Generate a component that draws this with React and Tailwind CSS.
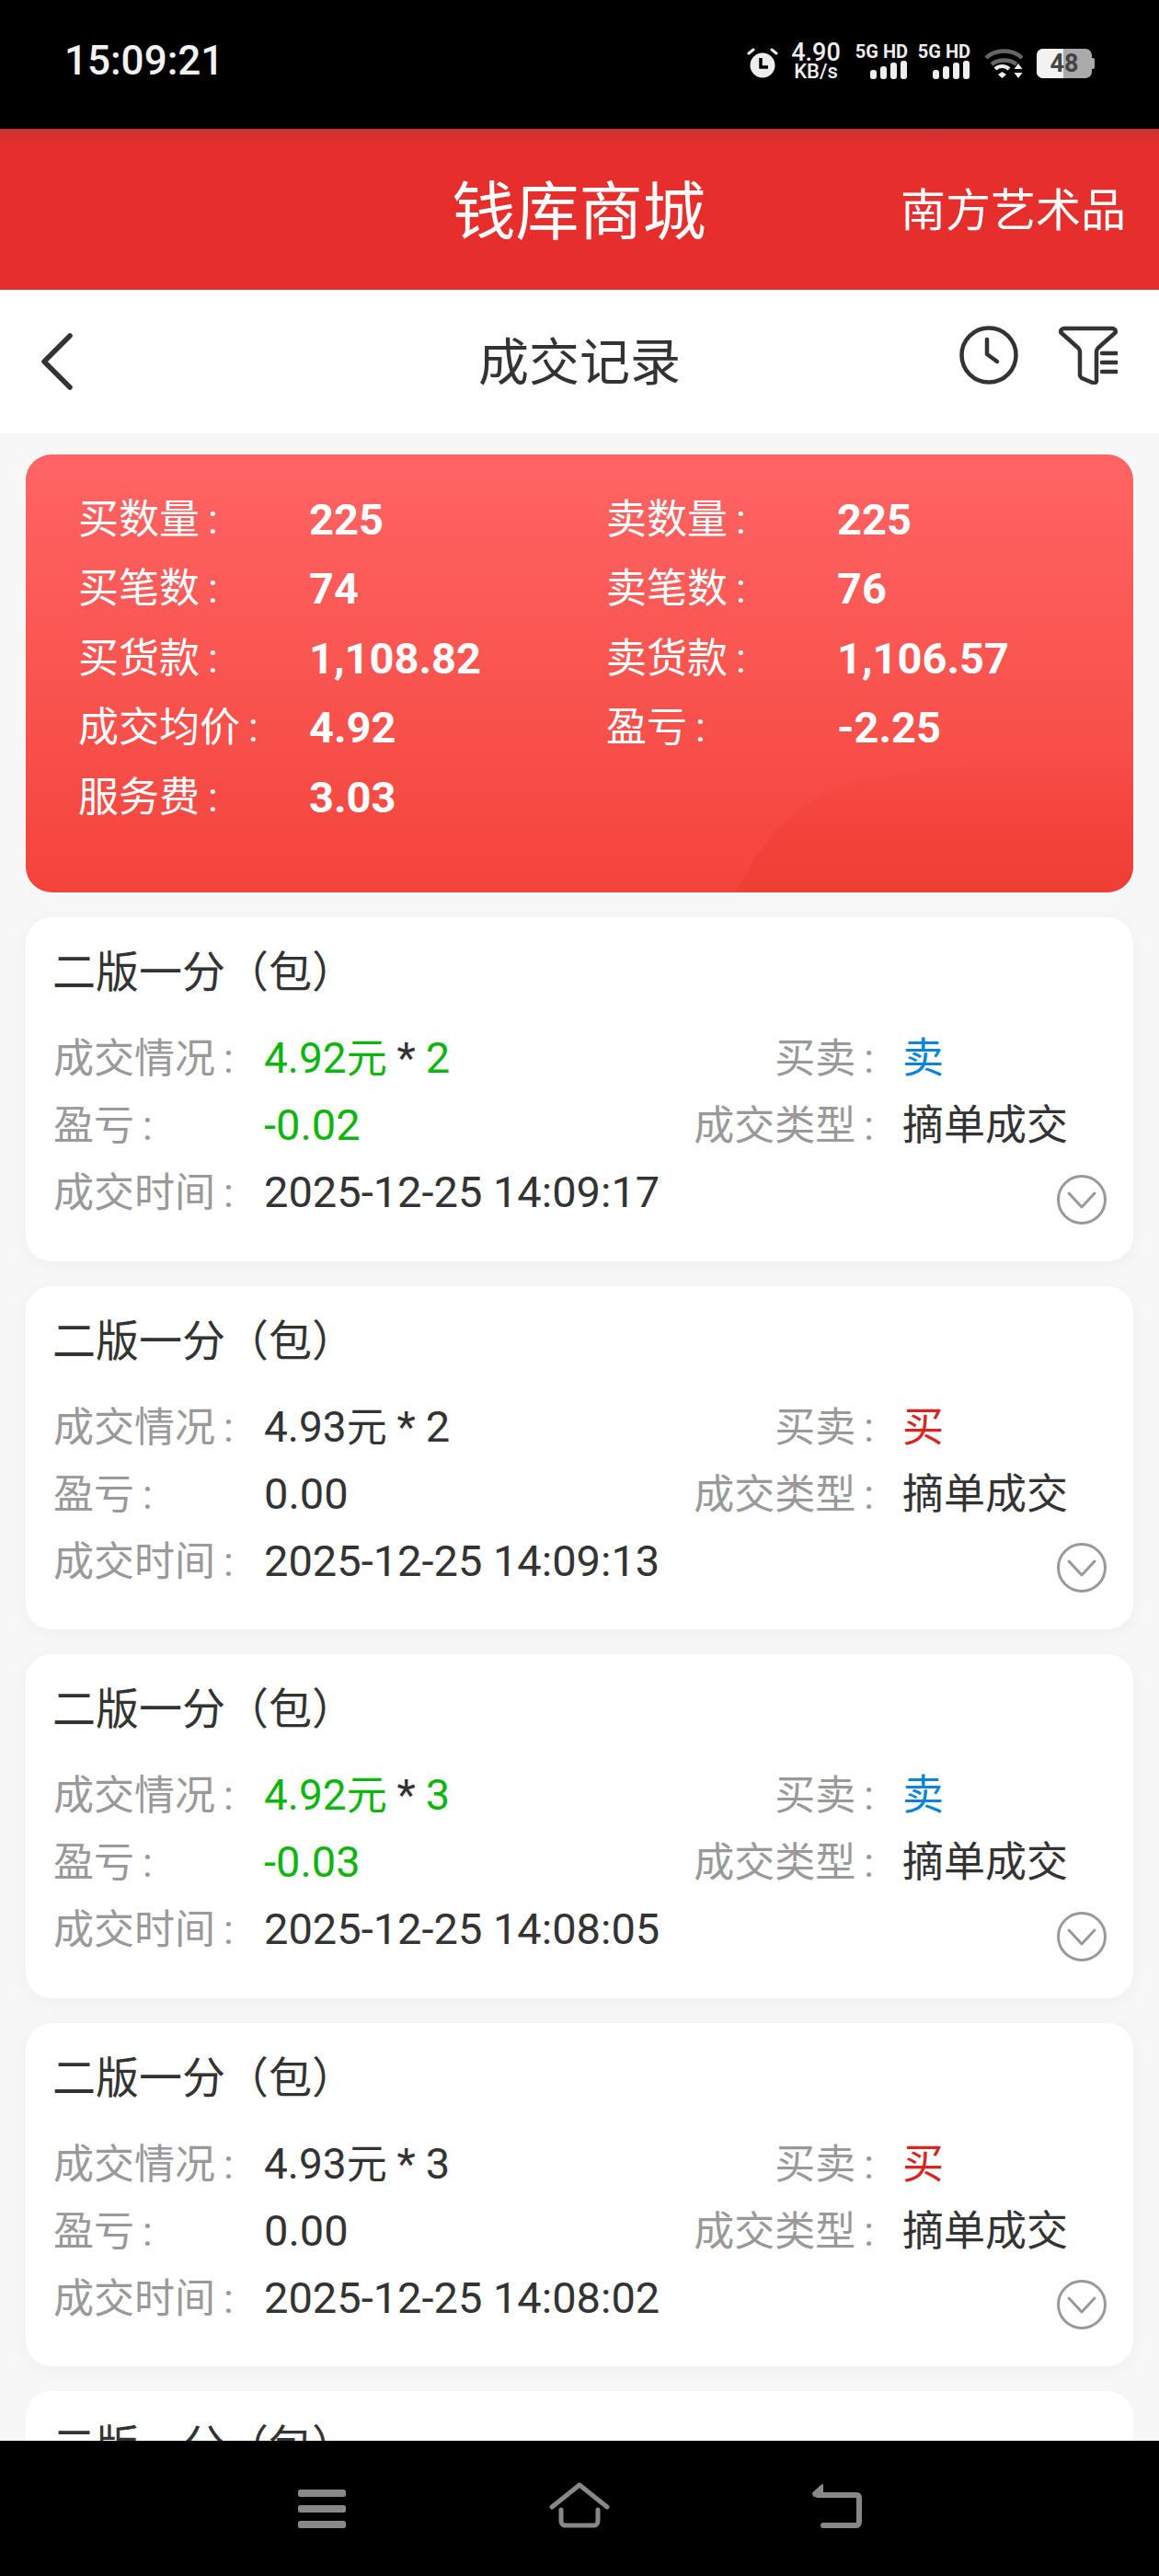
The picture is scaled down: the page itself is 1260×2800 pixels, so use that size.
import { Fragment } from 'react'

const FONT = "font-['Roboto','Noto_Sans_CJK_SC',sans-serif]"

const summary = [
  ['买数量', '225', '卖数量', '225'],
  ['买笔数', '74', '卖笔数', '76'],
  ['买货款', '1,108.82', '卖货款', '1,106.57'],
  ['成交均价', '4.92', '盈亏', '-2.25'],
  ['服务费', '3.03'],
]

const trades = [
  { price: '4.92', qty: '2', side: '卖', pl: '-0.02', time: '2025-12-25 14:09:17' },
  { price: '4.93', qty: '2', side: '买', pl: '0.00', time: '2025-12-25 14:09:13' },
  { price: '4.92', qty: '3', side: '卖', pl: '-0.03', time: '2025-12-25 14:08:05' },
  { price: '4.93', qty: '3', side: '买', pl: '0.00', time: '2025-12-25 14:08:02' },
]

// labels in the app have a small gap before the colon
function Label({ children }) {
  return (
    <>
      {children}
      <span className="ml-[9px]">:</span>
    </>
  )
}

function Bars() {
  return (
    <svg width="41" height="20" viewBox="0 0 41 20" fill="#eee">
      <rect x="0" y="10" width="7" height="10" rx="3" />
      <rect x="11" y="6" width="7" height="14" rx="3" />
      <rect x="22" y="2" width="7" height="18" rx="3" />
      <rect x="33" y="0" width="7" height="20" rx="3" />
    </svg>
  )
}

function Signal() {
  return (
    <div className="flex flex-col items-end w-[56px]">
      <span className="text-[20px] leading-[19px] font-bold text-[#eee] whitespace-nowrap">5G HD</span>
      <Bars />
    </div>
  )
}

function StatusBar() {
  return (
    <div className="h-[140px] bg-black flex items-start justify-between pl-[70px] pr-[70px] pt-[40px]">
      <span className="text-[44px] leading-[52px] font-medium text-[#f2f2f2]">15:09:21</span>
      <div className="flex items-start pt-[7px]">
        {/* alarm */}
        <svg className="mt-[5px]" width="34" height="33" viewBox="0 0 34 33">
          <circle cx="17" cy="19" r="13.5" fill="#eee" />
          <path d="M15 11v10h8" fill="none" stroke="#000" strokeWidth="3.5" />
          <path d="M2 6l5-4M32 6l-5-4" stroke="#eee" strokeWidth="3" strokeLinecap="round" />
        </svg>
        <div className="flex flex-col items-center w-[52px] ml-[15px] text-[#eee] font-medium">
          <span className="text-[27px] leading-[21px]">4.90</span>
          <span className="text-[22px] leading-[19px]">KB/s</span>
        </div>
        <div className="flex gap-[12px] ml-[18px]">
          <Signal />
          <Signal />
        </div>
        {/* wifi */}
        <svg className="ml-[15px] mt-[5px]" width="43" height="34" viewBox="0 0 43 34">
          <path d="M2 11C12 1 31 1 41 11" fill="none" stroke="#666" strokeWidth="4.5" />
          <path d="M8 18c7-6 20-6 27 0" fill="none" stroke="#666" strokeWidth="4.5" />
          <path d="M12 23c4-4 11-4 15 0" fill="none" stroke="#eee" strokeWidth="4" />
          <path d="M15 29l4.500-3 4.500 3-4.500 4z" fill="#eee" />
          <path d="M37 17l4.500 6h-9zM37 33l4.500-6h-9z" fill="#eee" />
        </svg>
        {/* battery */}
        <div className="flex items-center ml-[14px] mt-[6px]">
          <div className="relative w-[60px] h-[32px] rounded-[7px] overflow-hidden bg-[#aaa] flex">
            <div className="w-[29px] bg-[#f2f2f2]" />
            <span className="absolute inset-0 flex items-center justify-center text-[27px] leading-none font-bold text-[#444]">48</span>
          </div>
          <div className="w-[3px] h-[12px] rounded-r-[2px] bg-[#aaa]" />
        </div>
      </div>
    </div>
  )
}

function AppHeader() {
  return (
    <div className="relative h-[175px] bg-[#e62e2d] bg-gradient-to-b from-[#c73330] via-[#e62e2d] via-[12%] to-[#e62e2d] flex items-center justify-center text-white">
      <span className="text-[69px] leading-none mt-[8px] -ml-[1px]">钱库商城</span>
      <span className="absolute right-[36px] top-[65px] text-[49px] leading-none">南方艺术品</span>
    </div>
  )
}

function NavBar() {
  return (
    <div className="relative h-[156px] bg-white flex items-center justify-center">
      <svg className="absolute left-[43px] top-[47px]" width="36" height="62" viewBox="0 0 36 62" fill="none" stroke="#333" strokeWidth="5.5" strokeLinecap="round" strokeLinejoin="round">
        <path d="M33 3L5 31l28 28" />
      </svg>
      <span className="text-[55px] leading-none text-[#333] mt-[2px]">成交记录</span>
      <div className="absolute right-[45px] top-[39px] flex items-start gap-[44px]">
        <svg width="64" height="64" viewBox="0 0 64 64" fill="none" stroke="#333" strokeWidth="4.5" strokeLinecap="round" strokeLinejoin="round">
          <circle cx="32" cy="32" r="29.500" />
          <path d="M30 15v16l11 8" />
        </svg>
        <svg width="64" height="64" viewBox="0 0 64 64" fill="none" stroke="#333" strokeWidth="4.5" strokeLinecap="round" strokeLinejoin="round">
          <path d="M6 3h52c3 0 5 3 3 5L43 24c-1 1-2 2-2 4v32c0 2-2 3-4 2l-12-5c-1-1-2-2-2-3V28c0-2-1-3-2-4L3 8C1 6 3 3 6 3z" />
          <path d="M47 30h16M47 40h16M47 50h16" />
        </svg>
      </div>
    </div>
  )
}

function SummaryCard() {
  return (
    <div className="relative mx-[28px] h-[476px] rounded-[28px] overflow-hidden bg-gradient-to-b from-[#ff6464] to-[#f4433b] pl-[57px] pt-[44px]">
      {/* corner swoosh */}
      <svg className="absolute right-0 bottom-0" width="432" height="150" viewBox="0 0 432 150">
        <defs>
          <linearGradient id="swoosh" x1="0" y1="0" x2="0" y2="1">
            <stop offset="0%" stopColor="#ee3d33" stopOpacity="0" />
            <stop offset="100%" stopColor="#ee3d33" stopOpacity="0.8" />
          </linearGradient>
        </defs>
        <path d="M0 150C30 90 70 40 150 25 230 10 330 0 432 0V150Z" fill="url(#swoosh)" />
      </svg>
      <div className="relative grid grid-cols-[251px_323px_251px_auto] text-white">
        {summary.map((row) => (
          <Fragment key={row[0]}>
            {row.map((cell, i) => (
              i % 2 ? (
                <span key={i} className="h-[75.4px] text-[47px] leading-[54px] font-bold whitespace-nowrap">{cell}</span>
              ) : (
                <span key={i} className="h-[75.4px] text-[44px] leading-[54px] whitespace-nowrap"><Label>{cell}</Label></span>
              )
            ))}
          </Fragment>
        ))}
      </div>
    </div>
  )
}

function Row({ children, label, value, valueColor }) {
  return (
    <div className="flex h-[73px] items-baseline">
      <div className="flex flex-1 items-baseline">{children}</div>
      {label && (
        <>
          <span className="text-[#999]"><Label>{label}</Label></span>
          <span className={`ml-[31px] w-[189px] text-[45px] ${valueColor}`}>{value}</span>
        </>
      )}
    </div>
  )
}

function TradeCard({ trade }) {
  const sell = trade.side === '卖'
  const sideColor = sell ? 'text-[#0a84d8]' : 'text-[#d9251f]'
  const numColor = sell ? 'text-[#0db50d]' : 'text-[#333]'
  return (
    <div className="relative h-[373.5px] rounded-[28px] bg-white shadow-[0_4px_20px_rgba(0,0,0,0.04)] pl-[29px] pr-[62px] pt-[33px]">
      <div className="text-[47px] leading-[54px] text-[#333]">二版一分（包）</div>
      <div className="mt-[40px] pl-[1px] text-[44px] leading-[52px]">
        <Row label="买卖" value={trade.side} valueColor={sideColor}>
          <span className="w-[229px] text-[#999]"><Label>成交情况</Label></span>
          <span className={numColor}>
            <span className="text-[46px]">{trade.price}</span>元 <span className="text-[47px] text-[#333]">*</span> <span className="text-[47px]">{trade.qty}</span>
          </span>
        </Row>
        <Row label="成交类型" value="摘单成交" valueColor="text-[#333]">
          <span className="w-[229px] text-[#999]"><Label>盈亏</Label></span>
          <span className={`text-[47px] ${numColor}`}>{trade.pl}</span>
        </Row>
        <Row>
          <span className="w-[229px] text-[#999]"><Label>成交时间</Label></span>
          <span className="text-[47px] text-[#333]">{trade.time}</span>
        </Row>
      </div>
      <svg className="absolute right-[29px] bottom-[40px]" width="54" height="54" viewBox="0 0 54 54" fill="none" stroke="#999" strokeWidth="3" strokeLinecap="round" strokeLinejoin="round">
        <circle cx="27" cy="27" r="25.500" />
        <path d="M13 20l14 15 14-15" />
      </svg>
    </div>
  )
}

function BottomNav() {
  return (
    <div className="absolute left-0 right-0 top-[2653px] h-[147px] bg-black flex items-start pl-[324px] pt-[45px]">
      <svg className="mt-[8px]" width="52" height="42" viewBox="0 0 52 42" fill="#888">
        <rect x="0" y="0" width="52" height="8" rx="2.500" />
        <rect x="0" y="17" width="52" height="8" rx="2.500" />
        <rect x="0" y="34" width="52" height="8" rx="2.500" />
      </svg>
      <svg className="ml-[221px]" width="66" height="50" viewBox="0 0 66 50" fill="none" stroke="#888" strokeWidth="5" strokeLinecap="round" strokeLinejoin="round">
        <path d="M3 27L33 3l30 24" />
        <path d="M13 30v12c0 3 2 5 4 5h32c2 0 4-2 4-5V30" />
      </svg>
      <svg className="ml-[218px]" width="56" height="50" viewBox="0 0 56 50" fill="none" stroke="#888" strokeWidth="6" strokeLinecap="round" strokeLinejoin="round">
        <path d="M8 14h42c2 0 3 1 3 3v26c0 2-1 4-3 4H14" />
        <path d="M13 3L3 12l1 3h9z" fill="#888" strokeWidth="2" />
      </svg>
    </div>
  )
}

export default function App() {
  return (
    <div className={`relative w-[1260px] h-[2800px] overflow-hidden bg-[#f7f7f7] ${FONT}`}>
      <StatusBar />
      <AppHeader />
      <NavBar />
      <div className="pt-[23px]">
        <SummaryCard />
        <div className="mt-[27px] mx-[28px] flex flex-col gap-[27px]">
          {trades.map((t) => (
            <TradeCard key={t.time} trade={t} />
          ))}
          <div className="h-[373px] rounded-[28px] bg-white pl-[29px] pt-[33px]">
            <div className="text-[47px] leading-[54px] text-[#333]">二版一分（包）</div>
          </div>
        </div>
      </div>
      <BottomNav />
    </div>
  )
}
